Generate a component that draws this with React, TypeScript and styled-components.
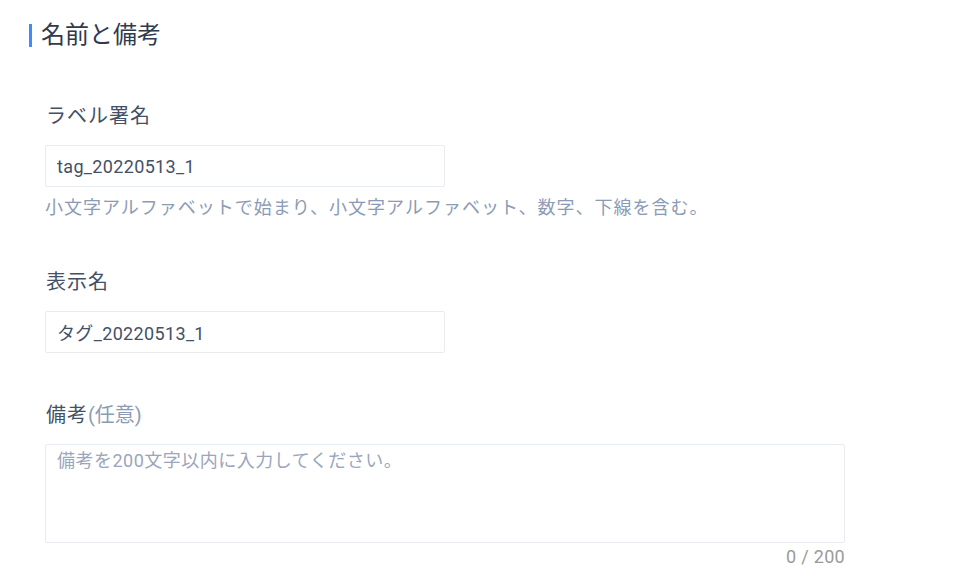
import styled, { createGlobalStyle } from 'styled-components'

const GlobalStyle = createGlobalStyle`
  body {
    margin: 0;
    background: #fff;
    font-family: Roboto, 'Noto Sans CJK JP', sans-serif;
    color: #2e3a4d;
  }
`

const Page = styled.div`
  padding: 22px 0 0 29px;
`

const SectionTitle = styled.h2`
  margin: 0;
  display: flex;
  align-items: center;
  gap: 9px;
  font-size: 24px;
  font-weight: 400;
  line-height: 26px;
  color: #2f3a4c;

  &::before {
    content: '';
    width: 3px;
    height: 23px;
    background: #3b8cff;
  }
`

const Form = styled.div`
  padding: 54px 0 0 16px;
  display: flex;
  flex-direction: column;
`

const Field = styled.div<{ $gap?: number }>`
  display: flex;
  flex-direction: column;
  margin-bottom: ${(p) => p.$gap ?? 0}px;
`

const Label = styled.label`
  font-size: 20px;
  line-height: 28px;
  letter-spacing: 1px;
  color: #435066;
  margin-bottom: 15px;
  padding-left: 1px;
`

const Optional = styled.span`
  color: #8c9bb5;
  letter-spacing: 0;
`

const TextInput = styled.input`
  box-sizing: border-box;
  width: 400px;
  height: 42px;
  border: 1px solid #e8ebf0;
  border-radius: 2px;
  padding: 0 11px;
  font: inherit;
  font-size: 18px;
  letter-spacing: 0.35px;
  color: #435066;
  outline: none;
`

const Hint = styled.div`
  margin-top: 8px;
  font-size: 18px;
  line-height: 26px;
  letter-spacing: 1px;
  color: #8c9bb5;
`

const TextArea = styled.textarea`
  box-sizing: border-box;
  width: 800px;
  height: 99px;
  border: 1px solid #e8ebf0;
  border-radius: 2px;
  padding: 4px 11px;
  font: inherit;
  font-size: 18px;
  line-height: 24px;
  letter-spacing: 0.5px;
  resize: none;
  outline: none;
  display: block;

  &::placeholder {
    color: #9aa6bd;
  }
`

const Counter = styled.div`
  width: 800px;
  text-align: right;
  font-size: 18px;
  line-height: 28px;
  letter-spacing: 0.3px;
  color: #9a9a9a;
`

export default function App() {
  return (
    <Page>
      <GlobalStyle />
      <SectionTitle>名前と備考</SectionTitle>
      <Form>
        <Field $gap={47}>
          <Label>ラベル署名</Label>
          <TextInput defaultValue="tag_20220513_1" />
          <Hint>小文字アルファベットで始まり、小文字アルファベット、数字、下線を含む。</Hint>
        </Field>
        <Field $gap={48}>
          <Label>表示名</Label>
          <TextInput defaultValue="タグ_20220513_1" />
        </Field>
        <Field>
          <Label>
            備考<Optional>(任意)</Optional>
          </Label>
          <TextArea placeholder="備考を200文字以内に入力してください。" />
          <Counter>0 / 200</Counter>
        </Field>
      </Form>
    </Page>
  )
}
